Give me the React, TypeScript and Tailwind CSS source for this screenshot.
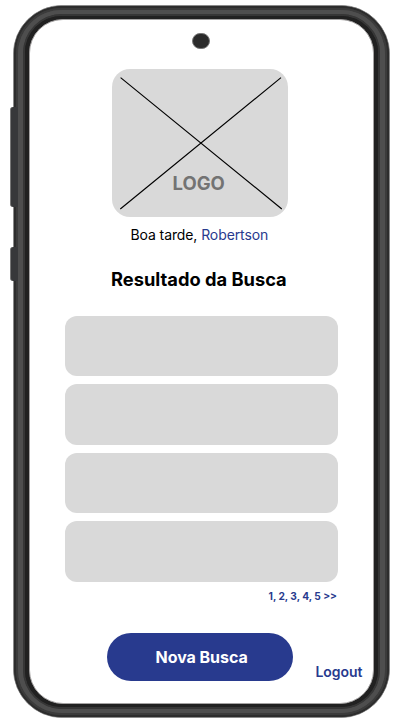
import React from "react";

function SideKey({ className }: { className: string }) {
  return (
    <div
      className={`absolute left-[10px] z-10 w-[8px] rounded-l-[3px] border-l border-[#777] bg-[#37383a] ${className}`}
    />
  );
}

function Logo() {
  return (
    <div className="relative mt-[49px] ml-[82px] h-[148px] w-[176px] rounded-[18px] bg-[#d9d9d9]">
      <svg className="absolute inset-0" width="176" height="148" viewBox="0 0 176 148">
        <path d="M8.6 8.6L169.8 140M169 8.6L8.3 140" stroke="#000" strokeWidth="1.15" fill="none" />
      </svg>
      <span className="absolute left-[60.5px] top-[103px] text-[18.5px] leading-[22px] font-bold text-[#737373]">
        LOGO
      </span>
    </div>
  );
}

const results = [1, 2, 3, 4];

function Screen() {
  return (
    <div className="flex h-full flex-col">
      <Logo />
      <p className="mt-[9px] ml-[100.5px] text-[14px] leading-[17px] tracking-[-0.1px] whitespace-nowrap text-black">
        Boa tarde, <span className="text-[#283a8e]">Robertson</span>
      </p>
      <h1 className="mt-[25px] ml-[81px] text-[18.3px] leading-[22px] font-bold whitespace-nowrap text-black">
        Resultado da Busca
      </h1>
      <div className="mt-[25.6px] ml-[35.3px] flex w-[273px] flex-col gap-[8px]">
        {results.map((r) => (
          <div key={r} className="h-[60.5px] rounded-[12px] bg-[#d9d9d9]" />
        ))}
      </div>
      <nav className="mt-[8.4px] mr-[36px] text-right text-[10.2px] leading-[12px] font-bold text-[#283a8e]">
        1, 2, 3, 4, 5 &gt;&gt;
      </nav>
      <div className="mt-[31px] flex">
        <button className="ml-[77.4px] h-[48px] w-[185.5px] rounded-[24px] bg-[#283a8e] pl-[3px] text-[16px] tracking-[-0.05px] font-bold text-white">
          Nova Busca
        </button>
        <a className="mt-[30px] ml-[22.6px] text-[14px] leading-[17px] tracking-[-0.05px] font-semibold text-[#283a8e]">
          Logout
        </a>
      </div>
    </div>
  );
}

export default function App() {
  return (
    <main className="relative h-[725px] w-[400px] overflow-hidden bg-white pt-[5px] pl-[13px] font-['Inter','Liberation_Sans',sans-serif]">
      <SideKey className="top-[107px] h-[100px]" />
      <SideKey className="top-[247px] h-[34px]" />
      <div className="relative h-[713px] w-[377px] rounded-[49px] border border-[#8a8a8a] bg-[#2c2c2c]">
        <div className="h-full rounded-[48px] border-2 border-[#2d2d2d] bg-[#3c3c3c]">
          <div className="h-full rounded-[46px] border-2 border-[#3b3b3b] bg-[#4e4e4e]">
            <div className="h-full rounded-[44px] border-x-[5px] border-y-[4px] border-[#4e4e4e] bg-[#353535]">
              <div className="h-full rounded-[39px] border-2 border-[#363636] bg-[#212121]">
                <div className="h-full rounded-[37px] border-x-4 border-y-[3px] border-[#212121] bg-[#212121]">
                  <div className="h-full rounded-[34px] border border-[#a5a3a3] bg-white">
                    <Screen />
                  </div>
                </div>
              </div>
            </div>
          </div>
        </div>
      </div>
      <div className="absolute top-[33px] left-[192px] h-[16px] w-[18px] rounded-full border border-[#777] bg-[#2b2b2b]" />
    </main>
  );
}
